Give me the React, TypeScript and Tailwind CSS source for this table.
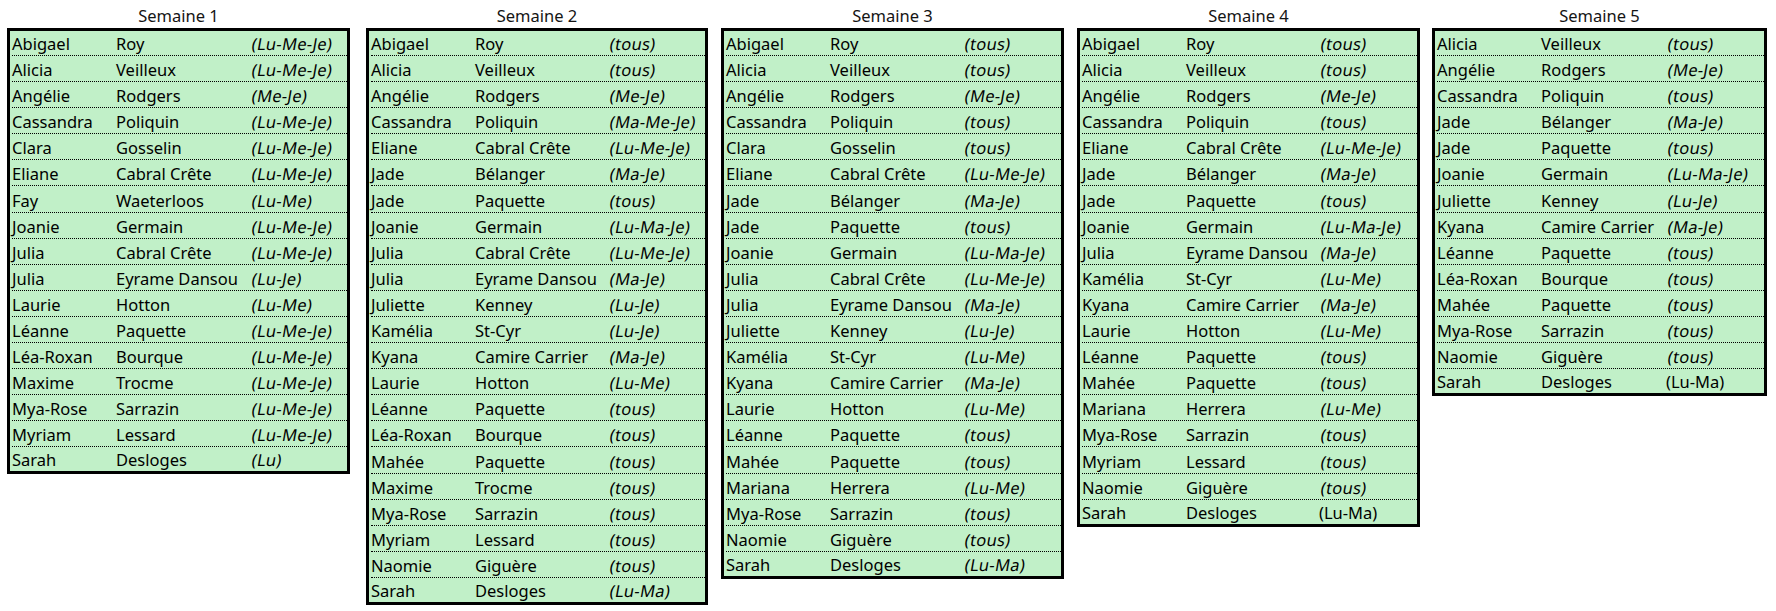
type Row = [string, string, string, boolean?];

const semaines: { titre: string; largeur: string; marge: string; col2: string; rows: Row[] }[] = [
  {
    titre: "Semaine 1",
    largeur: "w-[343px]",
    marge: "ml-0",
    col2: "w-[134px]",
    rows: [
      ["Abigael", "Roy", "(Lu-Me-Je)"],
      ["Alicia", "Veilleux", "(Lu-Me-Je)"],
      ["Angélie", "Rodgers", "(Me-Je)"],
      ["Cassandra", "Poliquin", "(Lu-Me-Je)"],
      ["Clara", "Gosselin", "(Lu-Me-Je)"],
      ["Eliane", "Cabral Crête", "(Lu-Me-Je)"],
      ["Fay", "Waeterloos", "(Lu-Me)"],
      ["Joanie", "Germain", "(Lu-Me-Je)"],
      ["Julia", "Cabral Crête", "(Lu-Me-Je)"],
      ["Julia", "Eyrame Dansou", "(Lu-Je)"],
      ["Laurie", "Hotton", "(Lu-Me)"],
      ["Léanne", "Paquette", "(Lu-Me-Je)"],
      ["Léa-Roxan", "Bourque", "(Lu-Me-Je)"],
      ["Maxime", "Trocme", "(Lu-Me-Je)"],
      ["Mya-Rose", "Sarrazin", "(Lu-Me-Je)"],
      ["Myriam", "Lessard", "(Lu-Me-Je)"],
      ["Sarah", "Desloges", "(Lu)"],
    ],
  },
  {
    titre: "Semaine 2",
    largeur: "w-[342px]",
    marge: "ml-[16px]",
    col2: "w-[133px]",
    rows: [
      ["Abigael", "Roy", "(tous)"],
      ["Alicia", "Veilleux", "(tous)"],
      ["Angélie", "Rodgers", "(Me-Je)"],
      ["Cassandra", "Poliquin", "(Ma-Me-Je)"],
      ["Eliane", "Cabral Crête", "(Lu-Me-Je)"],
      ["Jade", "Bélanger", "(Ma-Je)"],
      ["Jade", "Paquette", "(tous)"],
      ["Joanie", "Germain", "(Lu-Ma-Je)"],
      ["Julia", "Cabral Crête", "(Lu-Me-Je)"],
      ["Julia", "Eyrame Dansou", "(Ma-Je)"],
      ["Juliette", "Kenney", "(Lu-Je)"],
      ["Kamélia", "St-Cyr", "(Lu-Je)"],
      ["Kyana", "Camire Carrier", "(Ma-Je)"],
      ["Laurie", "Hotton", "(Lu-Me)"],
      ["Léanne", "Paquette", "(tous)"],
      ["Léa-Roxan", "Bourque", "(tous)"],
      ["Mahée", "Paquette", "(tous)"],
      ["Maxime", "Trocme", "(tous)"],
      ["Mya-Rose", "Sarrazin", "(tous)"],
      ["Myriam", "Lessard", "(tous)"],
      ["Naomie", "Giguère", "(tous)"],
      ["Sarah", "Desloges", "(Lu-Ma)"],
    ],
  },
  {
    titre: "Semaine 3",
    largeur: "w-[343px]",
    marge: "ml-[13px]",
    col2: "w-[133px]",
    rows: [
      ["Abigael", "Roy", "(tous)"],
      ["Alicia", "Veilleux", "(tous)"],
      ["Angélie", "Rodgers", "(Me-Je)"],
      ["Cassandra", "Poliquin", "(tous)"],
      ["Clara", "Gosselin", "(tous)"],
      ["Eliane", "Cabral Crête", "(Lu-Me-Je)"],
      ["Jade", "Bélanger", "(Ma-Je)"],
      ["Jade", "Paquette", "(tous)"],
      ["Joanie", "Germain", "(Lu-Ma-Je)"],
      ["Julia", "Cabral Crête", "(Lu-Me-Je)"],
      ["Julia", "Eyrame Dansou", "(Ma-Je)"],
      ["Juliette", "Kenney", "(Lu-Je)"],
      ["Kamélia", "St-Cyr", "(Lu-Me)"],
      ["Kyana", "Camire Carrier", "(Ma-Je)"],
      ["Laurie", "Hotton", "(Lu-Me)"],
      ["Léanne", "Paquette", "(tous)"],
      ["Mahée", "Paquette", "(tous)"],
      ["Mariana", "Herrera", "(Lu-Me)"],
      ["Mya-Rose", "Sarrazin", "(tous)"],
      ["Naomie", "Giguère", "(tous)"],
      ["Sarah", "Desloges", "(Lu-Ma)"],
    ],
  },
  {
    titre: "Semaine 4",
    largeur: "w-[343px]",
    marge: "ml-[13px]",
    col2: "w-[133px]",
    rows: [
      ["Abigael", "Roy", "(tous)"],
      ["Alicia", "Veilleux", "(tous)"],
      ["Angélie", "Rodgers", "(Me-Je)"],
      ["Cassandra", "Poliquin", "(tous)"],
      ["Eliane", "Cabral Crête", "(Lu-Me-Je)"],
      ["Jade", "Bélanger", "(Ma-Je)"],
      ["Jade", "Paquette", "(tous)"],
      ["Joanie", "Germain", "(Lu-Ma-Je)"],
      ["Julia", "Eyrame Dansou", "(Ma-Je)"],
      ["Kamélia", "St-Cyr", "(Lu-Me)"],
      ["Kyana", "Camire Carrier", "(Ma-Je)"],
      ["Laurie", "Hotton", "(Lu-Me)"],
      ["Léanne", "Paquette", "(tous)"],
      ["Mahée", "Paquette", "(tous)"],
      ["Mariana", "Herrera", "(Lu-Me)"],
      ["Mya-Rose", "Sarrazin", "(tous)"],
      ["Myriam", "Lessard", "(tous)"],
      ["Naomie", "Giguère", "(tous)"],
      ["Sarah", "Desloges", "(Lu-Ma)", true],
    ],
  },
  {
    titre: "Semaine 5",
    largeur: "w-[335px]",
    marge: "ml-[12px]",
    col2: "w-[125px]",
    rows: [
      ["Alicia", "Veilleux", "(tous)"],
      ["Angélie", "Rodgers", "(Me-Je)"],
      ["Cassandra", "Poliquin", "(tous)"],
      ["Jade", "Bélanger", "(Ma-Je)"],
      ["Jade", "Paquette", "(tous)"],
      ["Joanie", "Germain", "(Lu-Ma-Je)"],
      ["Juliette", "Kenney", "(Lu-Je)"],
      ["Kyana", "Camire Carrier", "(Ma-Je)"],
      ["Léanne", "Paquette", "(tous)"],
      ["Léa-Roxan", "Bourque", "(tous)"],
      ["Mahée", "Paquette", "(tous)"],
      ["Mya-Rose", "Sarrazin", "(tous)"],
      ["Naomie", "Giguère", "(tous)"],
      ["Sarah", "Desloges", "(Lu-Ma)", true],
    ],
  },
];

const App = () => {
  return (
    <div className="flex items-start bg-white pl-[7px] min-h-[611px] w-[1776px] text-[16.5px] leading-[22px] text-black font-['Noto_Sans',sans-serif]">
      {semaines.map((s) => (
        <div key={s.titre} className={`${s.largeur} ${s.marge} shrink-0`}>
          <div className="h-[28px] flex items-end justify-center pb-px text-[#141414]">{s.titre}</div>
          <div className="border-[3px] border-black bg-[#c1f0c8] pl-[2px]">
            {s.rows.map((r, i) => {
              const last = i === s.rows.length - 1;
              const h = i === 0 ? "h-[25px]" : last ? "h-[24px]" : "h-[26.1px]";
              return (
                <div
                  key={i}
                  className={`flex items-end whitespace-nowrap ${h} ${last ? "" : "border-b border-dotted border-black"}`}
                >
                  <span className="w-[104px] shrink-0">{r[0]}</span>
                  <span className={`${s.col2} shrink-0`}>{r[1]}</span>
                  {/* italique dessiné en oblique pour garder la largeur */}
                  <span className={r[3] ? "" : "inline-block -skew-x-10 tracking-[0.3px] origin-bottom"}>{r[2]}</span>
                </div>
              );
            })}
          </div>
        </div>
      ))}
    </div>
  );
};

export default App;
